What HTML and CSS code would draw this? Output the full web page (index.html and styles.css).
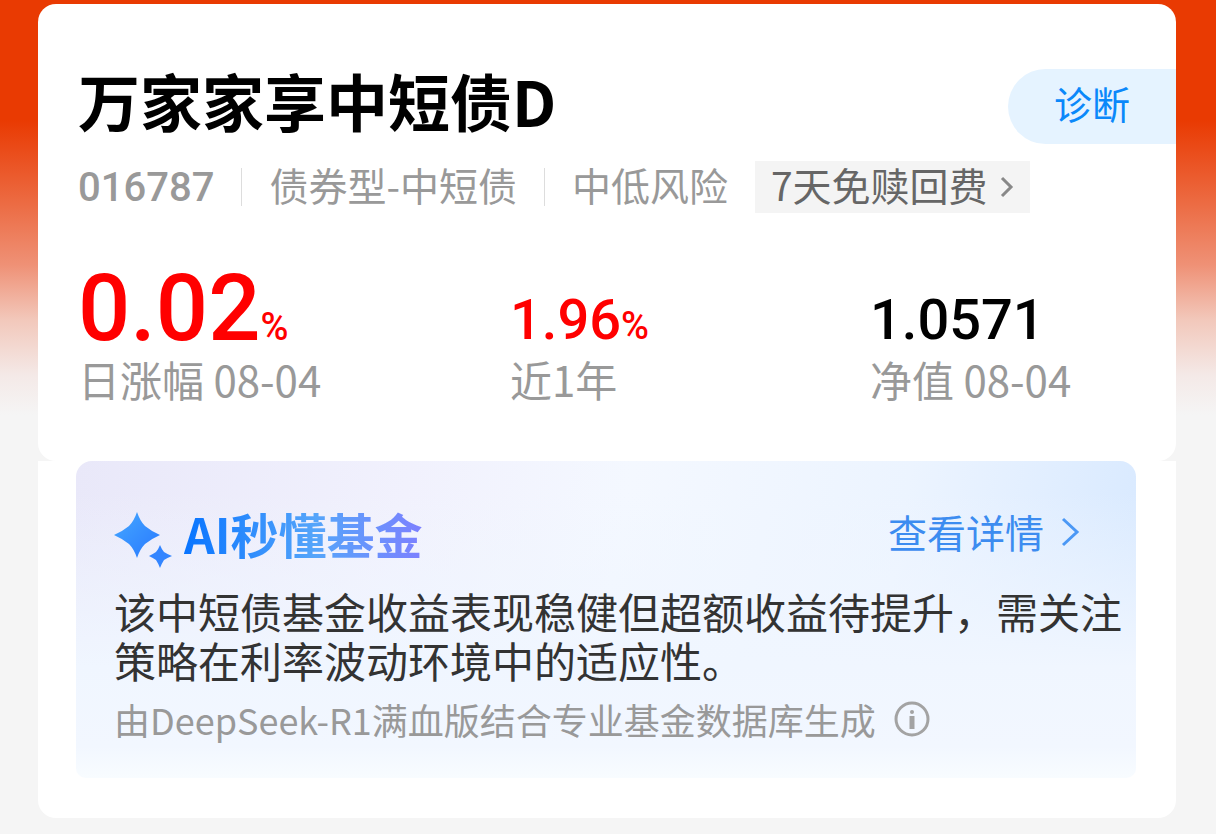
FILE: index.html
```html
<!DOCTYPE html>
<html lang="zh-CN">
  <head>
    <title>万家家享中短债D</title>
    <meta charset="utf-8" />
    <meta name="viewport" content="width=device-width, initial-scale=1" />
    <link rel="stylesheet" href="styles.css">
  </head>
  <body>
    <main>
      <section class="card fund">
        <div class="fund-head">
          <h1>万家家享中短债D</h1>
          <button type="button" class="diagnose">诊断</button>
        </div>

        <div class="meta">
          <span class="code">016787</span>
          <span class="divider"></span>
          <span class="tag">债券型-中短债</span>
          <span class="divider"></span>
          <span class="tag">中低风险</span>
          <a href="#" class="tag fee">
            7天免赎回费
            <svg width="14" height="28" viewBox="0 0 14 28" aria-hidden="true">
              <path d="M2 8l9 9-9 9" fill="none" stroke="#888" stroke-width="3" />
            </svg>
          </a>
        </div>

        <dl class="stats">
          <div class="stat">
            <dd class="value main up">0.02<small>%</small></dd>
            <dt>日涨幅 08-04</dt>
          </div>
          <div class="stat">
            <dd class="value up">1.96<small>%</small></dd>
            <dt>近1年</dt>
          </div>
          <div class="stat">
            <dd class="value">1.0571</dd>
            <dt>净值 08-04</dt>
          </div>
        </dl>
      </section>

      <section class="card insight">
        <div class="panel">
          <div class="panel-head">
            <svg width="58" height="58" viewBox="0 0 58 58" aria-hidden="true">
              <defs>
                <linearGradient id="spark" x1="0" y1="0" x2="1" y2="1">
                  <stop offset="0" stop-color="#45a8ff" />
                  <stop offset="1" stop-color="#2878ff" />
                </linearGradient>
              </defs>
              <path fill="url(#spark)" d="M23 2Q26 11 31 16Q37 21 46 25Q37 29 31 34Q26 39 23 48Q20 39 15 34Q9 29 0 25Q9 21 15 16Q20 11 23 2Z" />
              <path fill="#3385ff" d="M46 35Q48 40 50 42Q53 44 58 46Q53 48 50 50Q48 53 46 58Q44 53 42 50Q39 48 35 46Q39 44 42 42Q44 40 46 35Z" />
            </svg>
            <h2>AI秒懂基金</h2>
            <a href="#" class="detail">
              查看详情
              <svg width="20" height="32" viewBox="0 0 20 32" aria-hidden="true">
                <path d="M3 4l14 13L3 30" fill="none" stroke="#4b98f5" stroke-width="3" />
              </svg>
            </a>
          </div>
          <p class="summary">该中短债基金收益表现稳健但超额收益待提升，需关注策略在利率波动环境中的适应性。</p>
          <p class="source">
            由DeepSeek-R1满血版结合专业基金数据库生成
            <svg width="36" height="36" viewBox="0 0 36 36" aria-hidden="true">
              <circle cx="18" cy="18" r="16" fill="none" stroke="#a3a3a3" stroke-width="3" />
              <circle cx="18" cy="11" r="2" fill="#a3a3a3" />
              <path d="M18 15v13" stroke="#a3a3a3" stroke-width="5" />
            </svg>
          </p>
        </div>
      </section>
    </main>
  </body>
</html>
```

FILE: styles.css
```css
:root {
  --red: #e93a02;
  --page: #f5f5f5;
  --gray: #999;
  --padding: 40px;
  --text: "Noto Sans CJK SC", sans-serif;
  --number: Roboto, sans-serif;
}

* {
  box-sizing: border-box;
}

h1,
h2,
p,
dl,
dd {
  margin: 0;
}

a {
  text-decoration: none;
}

svg {
  flex: none;
}

body {
  margin: 0;
  min-height: 100vh;
  font-family: var(--text);
  background: var(--page) linear-gradient(var(--red) 120px, #ec6c44 205px, #ef9176 265px, #f2c8bb 320px, #f4e9e7 375px, var(--page) 415px) no-repeat;
}

main {
  padding: 4px 40px 16px 38px;
}

.card {
  background: #fff;
  padding-left: var(--padding);
}

.fund {
  padding-top: 65px;
  padding-bottom: 57px;
  border-radius: 18px;
}

.fund-head {
  display: flex;
  justify-content: space-between;
  align-items: flex-start;
}

h1 {
  font-size: 62px;
  line-height: 62px;
  font-weight: 700;
  color: #000;
}

.diagnose {
  width: 168px;
  height: 75px;
  padding: 0 0 8px;
  border: none;
  border-radius: 38px 0 0 38px;
  background: #e5f3ff;
  color: #0a88fa;
  font-family: var(--text);
  font-size: 38px;
  cursor: pointer;
}

.meta {
  display: flex;
  align-items: center;
  gap: 27px;
  margin-top: 17px;
  color: var(--gray);
  white-space: nowrap;
}

.code {
  font-family: var(--number);
  font-size: 40px;
  font-weight: 500;
}

.divider {
  width: 1px;
  height: 38px;
  background: #ddd;
}

.tag {
  padding-bottom: 6px;
  font-size: 39px;
  line-height: 46px;
}

.fee {
  display: flex;
  align-items: center;
  gap: 12px;
  padding-left: 16px;
  padding-right: 16px;
  background: #f4f4f4;
  color: #666;
}

.stats {
  display: grid;
  grid-template-columns: 432fr 360fr 306fr;
  align-items: end;
  margin-top: 51px;
  color: var(--gray);
}

.stat {
  display: flex;
  flex-direction: column;
}

.stat dt {
  font-size: 42px;
  line-height: 50px;
}

.value {
  font-family: var(--number);
  font-size: 56px;
  font-weight: 500;
  line-height: 67px;
  color: #000;
}

.value.main {
  font-size: 92px;
  line-height: 90px;
}

.value small {
  font-size: 38px;
  line-height: 1;
}

.value.up {
  color: #f00;
}

.insight {
  padding-right: var(--padding);
  padding-bottom: 40px;
  padding-left: 38px;
  border-radius: 0 0 18px 18px;
}

.panel {
  padding: 49px 12px 34px 38px;
  border-radius: 16px 16px 10px 10px;
  background:
    linear-gradient(transparent 10%, #f0f6ff 65%, #f2f7ff 90%, #f8fcff),
    linear-gradient(100deg, #e9e8f9, #f1f1fd 30%, #f4f8ff 50%, #ecf4ff 75%, #d6e8ff);
}

.panel-head {
  display: flex;
  align-items: flex-start;
}

h2 {
  margin-left: 12px;
  padding-bottom: 6px;
  font-size: 48px;
  line-height: 46px;
  font-weight: 700;
  color: transparent;
  background: linear-gradient(90deg, #0874ff, #55a5fa 55%, #7d80ff);
  background-clip: text;
  -webkit-background-clip: text;
}

.detail {
  display: flex;
  align-items: center;
  gap: 16px;
  margin-left: auto;
  margin-right: 44px;
  font-size: 39px;
  line-height: 42px;
  color: #3c8cf0;
}

.summary {
  margin-top: 18px;
  font-size: 42px;
  line-height: 49px;
  color: #333;
}

.source {
  display: flex;
  align-items: center;
  gap: 18px;
  margin-top: 10px;
  font-size: 36px;
  line-height: 50px;
  color: var(--gray);
}
```
